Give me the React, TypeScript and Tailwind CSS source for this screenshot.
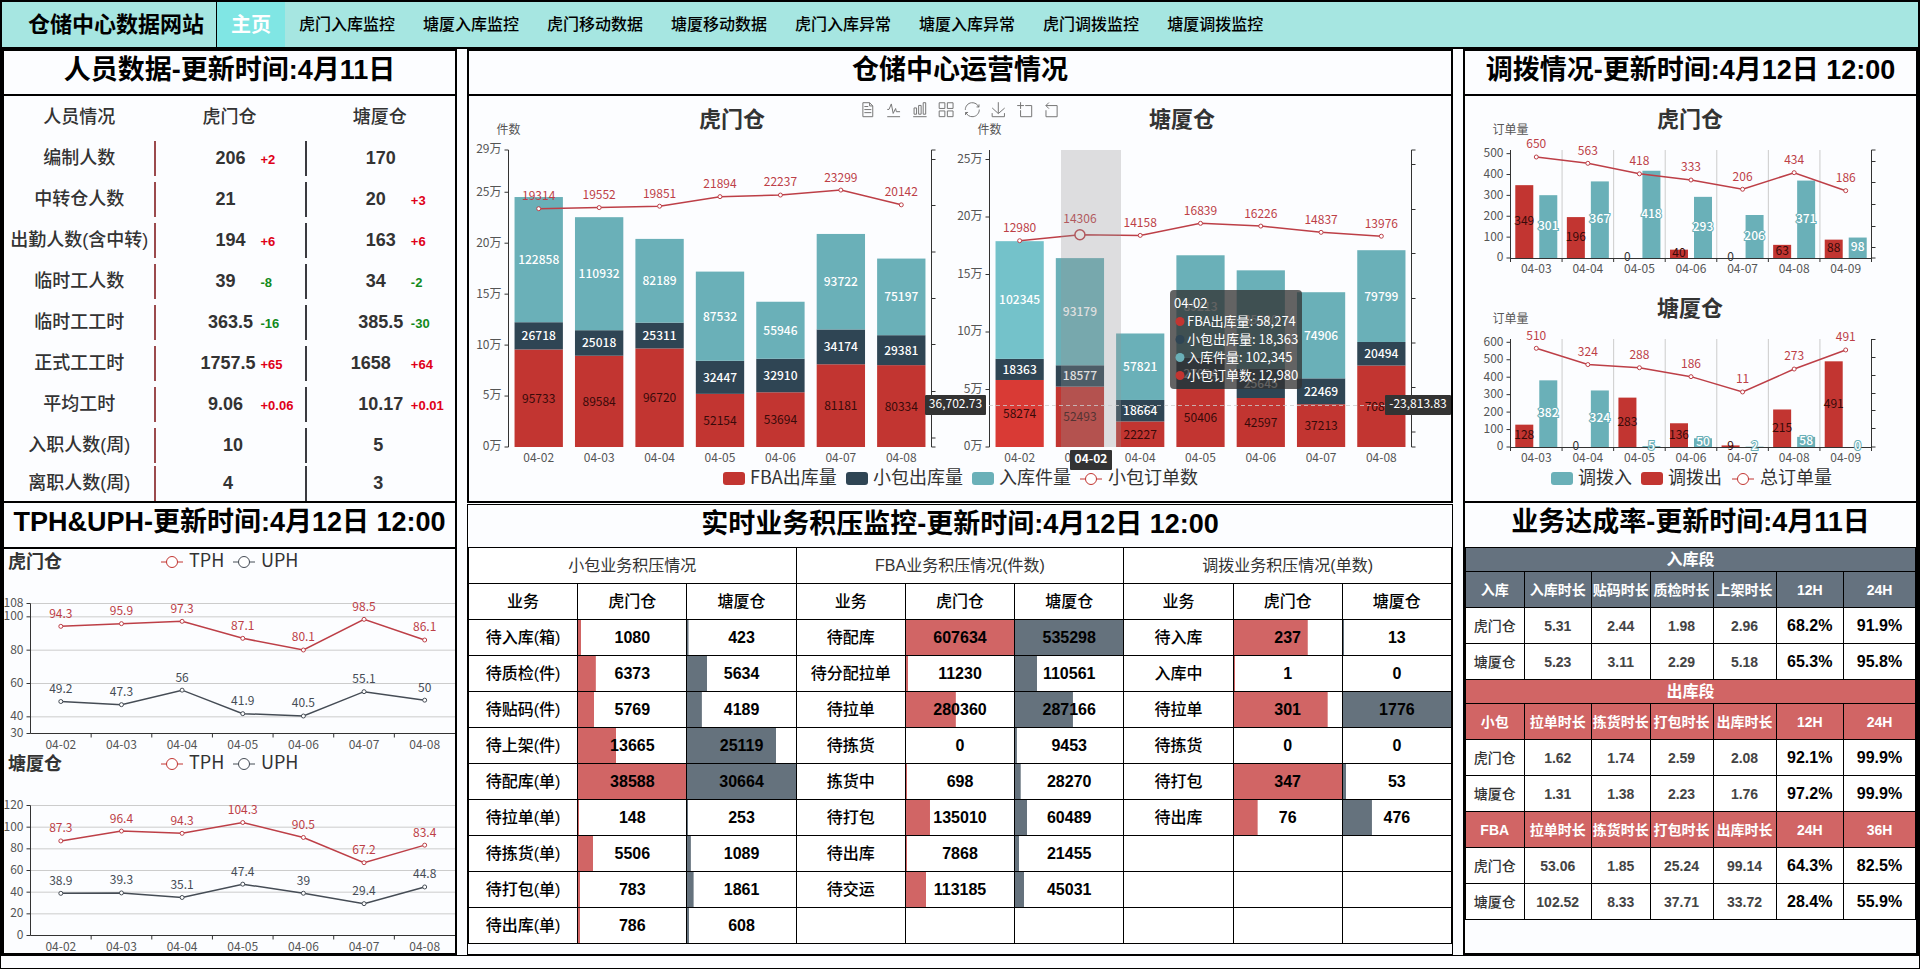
import type { ReactNode } from "react";

const RED = "#c23531";
const NAVY = "#2f4554";
const TEAL = "#6ab0b8";
const SLATE = "#454c55";
const INK = "#333333";
const CHART_FONT = "font-['Noto_Sans_CJK_SC',sans-serif]";

/* ---------- shared svg helpers ---------- */

type TxtProps = {
  x: number;
  y: number;
  size?: number;
  fill?: string;
  anchor?: "start" | "middle" | "end";
  bold?: boolean;
  halo?: string;
  children: ReactNode;
};

function Txt({ x, y, size = 12, fill = "#555", anchor = "middle", bold, halo, children }: TxtProps) {
  return (
    <text
      x={x}
      y={y + size * 0.37}
      fontSize={size}
      fill={fill}
      textAnchor={anchor}
      fontWeight={bold ? 700 : halo ? 500 : 400}
      stroke={halo}
      strokeWidth={halo ? 2 : undefined}
      paintOrder="stroke"
    >
      {children}
    </text>
  );
}

function Marker({ x, y, color }: { x: number; y: number; color: string }) {
  return <circle cx={x} cy={y} r={2} fill="#fff" stroke={color} strokeWidth={1} />;
}

function Axis({ x, top, bottom, ticks, side }: { x: number; top: number; bottom: number; ticks: number[]; side: 1 | -1 }) {
  return (
    <path
      d={`M${x},${top}V${bottom}` + ticks.map((t) => `M${x},${t}h${4 * side}`).join("")}
      stroke={INK}
      fill="none"
    />
  );
}

function LegendSwatch({ x, y, color, label }: { x: number; y: number; color: string; label: string }) {
  return (
    <g>
      <rect x={x} y={y - 6} width={22} height={13} rx={3} fill={color} />
      <Txt x={x + 27} y={y - 1} size={18} fill={INK} anchor="start">{label}</Txt>
    </g>
  );
}

function LegendLine({ x, y, color, label }: { x: number; y: number; color: string; label: string }) {
  return (
    <g>
      <path d={`M${x},${y + 1}h22`} stroke={color} />
      <circle cx={x + 11} cy={y + 1} r={5.5} fill="#fff" stroke={color} />
      <Txt x={x + 28} y={y - 1} size={18} fill={INK} anchor="start">{label}</Txt>
    </g>
  );
}

/* ---------- operations chart ---------- */

type Day = { fba: number; small: number; inbound: number; orders: number };

const HUMEN_OPS: Day[] = [
  { fba: 95733, small: 26718, inbound: 122858, orders: 19314 },
  { fba: 89584, small: 25018, inbound: 110932, orders: 19552 },
  { fba: 96720, small: 25311, inbound: 82189, orders: 19851 },
  { fba: 52154, small: 32447, inbound: 87532, orders: 21894 },
  { fba: 53694, small: 32910, inbound: 55946, orders: 22237 },
  { fba: 81181, small: 34174, inbound: 93722, orders: 23299 },
  { fba: 80334, small: 29381, inbound: 75197, orders: 20142 },
];

const TANGXIA_OPS: Day[] = [
  { fba: 58274, small: 18363, inbound: 102345, orders: 12980 },
  { fba: 52493, small: 18577, inbound: 93179, orders: 14306 },
  { fba: 22227, small: 18664, inbound: 57821, orders: 14158 },
  { fba: 50406, small: 27094, inbound: 89213, orders: 16839 },
  { fba: 42597, small: 25645, inbound: 85380, orders: 16226 },
  { fba: 37213, small: 22469, inbound: 74906, orders: 14837 },
  { fba: 70834, small: 20494, inbound: 79799, orders: 13976 },
];

const OPS_DATES = ["04-02", "04-03", "04-04", "04-05", "04-06", "04-07", "04-08"];

type OpsProps = {
  title: string;
  titleX: number;
  left: number;
  right: number;
  unit: number;
  yLabels: number[];
  days: Day[];
  lineY: (v: number) => number;
  rightTicks: number[];
  active?: number;
  hovered?: number;
};

function OpsGrid({ title, titleX, left, right, unit, yLabels, days, lineY, rightTicks, active, hovered }: OpsProps) {
  const top = 54;
  const bottom = 351;
  const step = (right - left) / 7;
  const bar = step * 0.8;
  const points = days.map((d, i) => [left + step * (i + 0.5), lineY(d.orders)]);
  return (
    <g>
      <Txt x={titleX} y={23} size={22} fill={INK} bold>{title}</Txt>
      <Txt x={left} y={34}>件数</Txt>
      {days.map((d, i) => {
        const x = left + step * i + (step - bar) / 2;
        const on = i === active;
        const parts = [
          { v: d.fba, fill: on ? "#d93a35" : RED, text: "#380a09", halo: undefined },
          { v: d.small, fill: NAVY, text: "#fff", halo: NAVY },
          { v: d.inbound, fill: on ? "#74c2ca" : TEAL, text: "#fff", halo: on ? "#74c2ca" : TEAL },
        ];
        let base = bottom;
        return (
          <g key={i}>
            {parts.map((p, k) => {
              const h = (p.v / 10000) * unit;
              base -= h;
              return (
                <g key={k}>
                  <rect x={x} y={base} width={bar} height={h} fill={p.fill} />
                  <Txt x={x + bar / 2} y={base + h / 2} fill={p.text} halo={p.halo}>{p.v}</Txt>
                </g>
              );
            })}
            <Txt x={x + bar / 2} y={362}>{OPS_DATES[i]}</Txt>
          </g>
        );
      })}
      <Axis x={left} top={top} bottom={bottom} ticks={yLabels.map((v) => (v === 29 ? top : bottom - v * unit))} side={-1} />
      <Axis x={right} top={top} bottom={bottom} ticks={rightTicks} side={1} />
      {yLabels.map((v) => (
        <Txt key={v} x={left - 7} y={(v === 29 ? top : bottom - v * unit) - 1} anchor="end">{v}万</Txt>
      ))}
      <polyline points={points.map((p) => p.join(",")).join(" ")} fill="none" stroke="#bd3f47" strokeWidth={1.5} />
      {points.map(([x, y], i) => (
        <g key={i}>
          {i === hovered ? (
            <circle cx={x} cy={y} r={5} fill="#fff" stroke="#bd3f47" strokeWidth={1.5} />
          ) : (
            <Marker x={x} y={y} color="#bd3f47" />
          )}
          <Txt x={x} y={y - (i === hovered ? 16 : 13)} fill="#bd3f47">{days[i].orders}</Txt>
        </g>
      ))}
    </g>
  );
}

const TOOL_ICONS = [
  "M17.5,17.3H33 M45.4,29.5h-28 M11.5,2v56H51V14.8L38.4,2H11.5z M38.4,2.2v12.7H51 M45.4,41.7h-28",
  "M4.1,28.9h7.1l9.3-22l7.4,38l9.7-19.7l3,12.8h14.9M4.1,58h51.4",
  "M6.7,22.9h10V48h-10V22.9zM24.9,13h10v35h-10V13zM43.2,2h10v46h-10V2zM3.1,58h53.7",
  "M2.3,2.2h22.8V25H2.3V2.2z M35,2.2h22.8V25H35V2.2zM2.3,35h22.8v22.8H2.3V35z M35,35h22.8v22.8H35V35z",
  "M47,18.9h9.8V8.7 M56.3,20.1 C52.1,9,40.5,0.6,26.8,2.1C12.6,3.7,1.6,16.2,2.1,30.6 M13,41.1H3.1v10.2 M3.7,39.9c4.2,11.1,15.8,19.5,29.5,18 c14.2-1.6,25.2-14.1,24.7-28.5",
  "M4.7,22.9L29.3,45.5L54.7,23.4M4.6,43.6L4.6,58L53.8,58L53.8,43.6M29.2,45.1L29.2,0",
  "M0,13.5h26.9 M13.5,26.9V0 M32.1,13.5H58V58H13.5 V32.1",
  "M22,1.4L9.9,13.5l12.3,12.3 M10.3,13.5H54.9v44.6 H10.3v-26",
];

const TOOLTIP = [
  { color: RED, text: "FBA出库量: 58,274" },
  { color: NAVY, text: "小包出库量: 18,363" },
  { color: TEAL, text: "入库件量: 102,345" },
  { color: RED, text: "小包订单数: 12,980" },
];

function PointerLabel({ x, y, w, text, bold }: { x: number; y: number; w: number; text: string; bold?: boolean }) {
  return (
    <g>
      <rect x={x} y={y} width={w} height={20} rx={1} fill="#333" />
      <Txt x={x + w / 2} y={y + 9} fill="#fff" bold={bold}>{text}</Txt>
    </g>
  );
}

function OperationsChart() {
  return (
    <svg viewBox="0 0 982 405" className={`block w-full overflow-visible ${CHART_FONT}`} role="img" aria-label="仓储中心运营情况">
      <OpsGrid
        title="虎门仓"
        titleX={263}
        left={39.5}
        right={462.5}
        unit={10.19}
        yLabels={[0, 5, 10, 15, 20, 25, 29]}
        days={HUMEN_OPS}
        lineY={(v) => 112.7 - (v - 19314) * 0.00467}
        rightTicks={[54, 63.5, 109.5, 156, 202.5, 248.5, 295.5, 342, 351]}
      />
      <OpsGrid
        title="塘厦仓"
        titleX={713}
        left={520.5}
        right={942.5}
        unit={11.5}
        yLabels={[0, 5, 10, 15, 20, 25]}
        days={TANGXIA_OPS}
        lineY={(v) => 144.7 - (v - 12980) * 0.0045}
        rightTicks={[54, 68.5, 113.5, 157.5, 202.5, 247, 291.5, 336, 351]}
        active={0}
        hovered={1}
      />
      <g fill="none" stroke="#777" strokeWidth={1}>
        {TOOL_ICONS.map((d, i) => (
          <path key={i} d={d} transform={`translate(${391 + i * 26.2},6.2) scale(0.25)`} vectorEffect="non-scaling-stroke" />
        ))}
      </g>
      <rect x={592} y={54} width={60} height={297} fill="#969696" fillOpacity={0.3} />
      <path d="M520,309.5H942" stroke="#ccc" strokeDasharray="4 3" strokeOpacity={0.8} />
      <PointerLabel x={456} y={299} w={61} text="36,702.73" />
      <PointerLabel x={916} y={299} w={66} text="-23,813.83" />
      <PointerLabel x={601} y={354} w={42} text="04-02" bold />
      <g>
        <rect x={701} y={194} width={132} height={99} rx={4} fill="#323232" fillOpacity={0.76} />
        <Txt x={705} y={207} size={13} fill="#fff" anchor="start">04-02</Txt>
        {TOOLTIP.map((t, i) => (
          <g key={t.text}>
            <circle cx={711} cy={225.5 + i * 18} r={4.5} fill={t.color} />
            <Txt x={718} y={225 + i * 18} size={13} fill="#fff" anchor="start">{t.text}</Txt>
          </g>
        ))}
      </g>
      <LegendSwatch x={254} y={382} color={RED} label="FBA出库量" />
      <LegendSwatch x={377} y={382} color={NAVY} label="小包出库量" />
      <LegendSwatch x={503} y={382} color={TEAL} label="入库件量" />
      <LegendLine x={611} y={382} color={RED} label="小包订单数" />
    </svg>
  );
}

/* ---------- transfer chart ---------- */

const TRANSFER_DATES = ["04-03", "04-04", "04-05", "04-06", "04-07", "04-08", "04-09"];

type TransferProps = {
  title: string;
  top: number;
  bottom: number;
  unit: number;
  yMax: number;
  out: number[];
  into: number[];
  total: number[];
  lineY: (v: number) => number;
  rightTicks: number[];
};

function TransferGrid({ title, top, bottom, unit, yMax, out, into, total, lineY, rightTicks }: TransferProps) {
  const left = 45.5;
  const right = 406.5;
  const step = (right - left) / 7;
  const ys = Array.from({ length: yMax / 100 + 1 }, (_, i) => i * 100);
  const center = (i: number) => left + step * (i + 0.5);
  return (
    <g>
      <Txt x={225} y={top - 31} size={22} fill={INK} bold>{title}</Txt>
      <Txt x={left} y={top - 20}>订单量</Txt>
      {[1, 2, 3, 4, 5, 6].map((i) => (
        <path key={i} d={`M${left + step * i},${top}V${bottom}`} stroke="#ccc" />
      ))}
      {TRANSFER_DATES.map((date, i) => (
        <g key={date}>
          <rect x={center(i) - 21} y={bottom - out[i] * unit} width={18} height={out[i] * unit} fill={RED} />
          <rect x={center(i) + 3} y={bottom - into[i] * unit} width={18} height={into[i] * unit} fill={TEAL} />
        </g>
      ))}
      <path
        d={`M${left},${bottom + 0.5}H${right}` + [0, 1, 2, 3, 4, 5, 6, 7].map((i) => `M${left + step * i},${bottom}v4`).join("")}
        stroke={INK}
      />
      <Axis x={left} top={top} bottom={bottom} ticks={ys.map((v) => bottom - v * unit)} side={-1} />
      <Axis x={right} top={top} bottom={bottom} ticks={rightTicks} side={1} />
      {ys.map((v) => (
        <Txt key={v} x={left - 7} y={bottom - v * unit - 1} anchor="end">{v}</Txt>
      ))}
      {TRANSFER_DATES.map((date, i) => (
        <g key={date}>
          <Txt x={center(i) - 12} y={bottom - (out[i] * unit) / 2 - 1} fill={out[i] ? "#380a09" : INK}>{out[i]}</Txt>
          <Txt x={center(i) + 12} y={bottom - (into[i] * unit) / 2 - 1} fill="#fff" halo={TEAL}>{into[i]}</Txt>
          <Txt x={center(i)} y={bottom + 11}>{date}</Txt>
        </g>
      ))}
      <polyline points={total.map((v, i) => `${center(i)},${lineY(v)}`).join(" ")} fill="none" stroke="#bd3f47" strokeWidth={1.5} />
      {total.map((v, i) => (
        <g key={i}>
          <Marker x={center(i)} y={lineY(v)} color="#bd3f47" />
          <Txt x={center(i)} y={lineY(v) - 13} fill="#bd3f47">{v}</Txt>
        </g>
      ))}
    </g>
  );
}

function TransferChart() {
  return (
    <svg viewBox="0 0 451 405" className={`block w-full overflow-visible ${CHART_FONT}`} role="img" aria-label="调拨情况">
      <TransferGrid
        title="虎门仓"
        top={54}
        bottom={162}
        unit={0.2087}
        yMax={500}
        out={[349, 196, 0, 40, 0, 63, 88]}
        into={[301, 367, 418, 293, 206, 371, 98]}
        total={[650, 563, 418, 333, 206, 434, 186]}
        lineY={(v) => 61 + (650 - v) * 0.0726}
        rightTicks={[54, 65.5, 86.5, 108.5, 130.5, 151.5, 162]}
      />
      <TransferGrid
        title="塘厦仓"
        top={243}
        bottom={351}
        unit={0.1745}
        yMax={600}
        out={[128, 0, 283, 136, 9, 215, 491]}
        into={[382, 324, 5, 50, 2, 58, 0]}
        total={[510, 324, 288, 186, 11, 273, 491]}
        lineY={(v) => 252.3 + (510 - v) * 0.0875}
        rightTicks={[243.5, 261.5, 279.5, 297.5, 314.5, 332.5, 351]}
      />
      <LegendSwatch x={86} y={382} color={TEAL} label="调拨入" />
      <LegendSwatch x={176} y={382} color={RED} label="调拨出" />
      <LegendLine x={267} y={382} color={RED} label="总订单量" />
    </svg>
  );
}

/* ---------- TPH & UPH charts ---------- */

function RateChart({ title, min, max, ticks, tph, uph }: { title: string; min: number; max: number; ticks: number[]; tph: number[]; uph: number[] }) {
  const left = 26.5;
  const right = 451;
  const top = 54.5;
  const bottom = 184.5;
  const step = (right - left) / 7;
  const yOf = (v: number) => bottom - ((v - min) / (max - min)) * (bottom - top);
  const center = (i: number) => left + step * (i + 0.5);
  const series = [
    { name: "TPH", data: tph, color: "#bd3f47" },
    { name: "UPH", data: uph, color: SLATE },
  ];
  return (
    <svg viewBox="0 0 451 202" className={`block w-full overflow-visible ${CHART_FONT}`} role="img" aria-label={`${title} TPH UPH`}>
      <Txt x={4} y={12} size={18} fill={INK} anchor="start" bold>{title}</Txt>
      <LegendLine x={157} y={12} color={RED} label="TPH" />
      <LegendLine x={229} y={12} color={SLATE} label="UPH" />
      {ticks.filter((t) => t > min).map((t) => (
        <path key={t} d={`M${left},${yOf(t)}H${right}`} stroke="#ccc" />
      ))}
      <Axis x={left} top={top} bottom={bottom} ticks={ticks.map(yOf)} side={-1} />
      <path d={`M${left},${bottom}H${right}` + [1, 2, 3, 4, 5, 6].map((i) => `M${left + step * i},${bottom}v4`).join("")} stroke={INK} />
      {ticks.map((t) => (
        <Txt key={t} x={left - 7} y={yOf(t) - 1} anchor="end">{t}</Txt>
      ))}
      {OPS_DATES.map((d, i) => (
        <Txt key={d} x={center(i)} y={196}>{d}</Txt>
      ))}
      {series.map((s) => (
        <g key={s.name}>
          <polyline points={s.data.map((v, i) => `${center(i)},${yOf(v)}`).join(" ")} fill="none" stroke={s.color} strokeWidth={1.5} />
          {s.data.map((v, i) => (
            <g key={i}>
              <Marker x={center(i)} y={yOf(v)} color={s.color} />
              <Txt x={center(i)} y={yOf(v) - 13} fill={s.color}>{v}</Txt>
            </g>
          ))}
        </g>
      ))}
    </svg>
  );
}

/* ---------- tables ---------- */

type Staff = { label: string; slot: string; a: string; da?: string; b: string; db?: string };

const STAFF: Staff[] = [
  { label: "编制人数", slot: "w-[30px]", a: "206", da: "+2", b: "170" },
  { label: "中转仓人数", slot: "w-[30px]", a: "21", b: "20", db: "+3" },
  { label: "出勤人数(含中转)", slot: "w-[30px]", a: "194", da: "+6", b: "163", db: "+6" },
  { label: "临时工人数", slot: "w-[30px]", a: "39", da: "-8", b: "34", db: "-2" },
  { label: "临时工工时", slot: "w-[45px]", a: "363.5", da: "-16", b: "385.5", db: "-30" },
  { label: "正式工工时", slot: "w-[60px]", a: "1757.5", da: "+65", b: "1658", db: "+64" },
  { label: "平均工时", slot: "w-[45px]", a: "9.06", da: "+0.06", b: "10.17", db: "+0.01" },
  { label: "入职人数(周)", slot: "w-[15px]", a: "10", b: "5" },
  { label: "离职人数(周)", slot: "w-[15px]", a: "4", b: "3" },
];

function StaffCell({ value, diff, slot, line }: { value: string; diff?: string; slot: string; line: string }) {
  return (
    <td className="p-0">
      <div className={`grid h-[35px] grid-cols-[1fr_60px_1fr] items-baseline border-l-2 pt-1 ${line}`}>
        <span />
        <span className="flex justify-center">
          <span className={`whitespace-nowrap ${slot}`}>{value}</span>
        </span>
        <span className={`text-[13px] ${diff?.startsWith("-") ? "text-[#128a1c]" : "text-[#df0018]"}`}>{diff}</span>
      </div>
    </td>
  );
}

function StaffTable() {
  return (
    <table className="w-full table-fixed border-collapse text-[18px] font-bold text-[#333]">
      <thead>
        <tr className="h-[42px]">
          <th className="p-0 font-medium">人员情况</th>
          <th className="p-0 font-medium">虎门仓</th>
          <th className="p-0 font-medium">塘厦仓</th>
        </tr>
      </thead>
      <tbody>
        {STAFF.map((r, i) => (
          <tr key={r.label} className={i === STAFF.length - 1 ? "h-[35px]" : "h-[41px]"}>
            <th className="p-0 font-medium whitespace-nowrap">{r.label}</th>
            <StaffCell value={r.a} diff={r.da} slot={r.slot} line="border-[#9b4a4d]" />
            <StaffCell value={r.b} diff={r.db} slot={r.slot} line="border-[#3a3a40]" />
          </tr>
        ))}
      </tbody>
    </table>
  );
}

type Backlog = [string, number, number];

const BACKLOG: { title: string; rows: Backlog[] }[] = [
  {
    title: "小包业务积压情况",
    rows: [
      ["待入库(箱)", 1080, 423], ["待质检(件)", 6373, 5634], ["待贴码(件)", 5769, 4189],
      ["待上架(件)", 13665, 25119], ["待配库(单)", 38588, 30664], ["待拉单(单)", 148, 253],
      ["待拣货(单)", 5506, 1089], ["待打包(单)", 783, 1861], ["待出库(单)", 786, 608],
    ],
  },
  {
    title: "FBA业务积压情况(件数)",
    rows: [
      ["待配库", 607634, 535298], ["待分配拉单", 11230, 110561], ["待拉单", 280360, 287166],
      ["待拣货", 0, 9453], ["拣货中", 698, 28270], ["待打包", 135010, 60489],
      ["待出库", 7868, 21455], ["待交运", 113185, 45031],
    ],
  },
  {
    title: "调拨业务积压情况(单数)",
    rows: [
      ["待入库", 237, 13], ["入库中", 1, 0], ["待拉单", 301, 1776],
      ["待拣货", 0, 0], ["待打包", 347, 53], ["待出库", 76, 476],
    ],
  },
];

function BarCell({ value, max, tone }: { value?: number; max: number; tone: string }) {
  if (value === undefined) return <td className="border border-black" />;
  const width = value === 0 ? 0 : Math.max((value / max) * 100, 1);
  return (
    <td
      className={`border border-black bg-white bg-no-repeat p-0 text-center font-bold ${tone}`}
      style={{ backgroundSize: `${width}% 100%` }}
    >
      {value}
    </td>
  );
}

function BacklogTable() {
  const maxes = BACKLOG.map((g) => [Math.max(...g.rows.map((r) => r[1])), Math.max(...g.rows.map((r) => r[2]))]);
  return (
    <table className="w-full table-fixed border-collapse bg-white text-[16px] leading-5 text-black">
      <thead>
        <tr className="h-9">
          {BACKLOG.map((g) => (
            <th key={g.title} colSpan={3} className="border border-black p-0 font-normal text-[#333]">{g.title}</th>
          ))}
        </tr>
        <tr className="h-9">
          {BACKLOG.flatMap((g) =>
            ["业务", "虎门仓", "塘厦仓"].map((h) => (
              <th key={g.title + h} className="border border-black p-0 font-medium">{h}</th>
            )),
          )}
        </tr>
      </thead>
      <tbody>
        {Array.from({ length: 9 }, (_, i) => (
          <tr key={i} className="h-9">
            {BACKLOG.flatMap((g, k) => {
              const row = g.rows[i];
              return [
                <th key={`${k}n`} className="border border-black p-0 font-medium">{row?.[0]}</th>,
                <BarCell key={`${k}a`} value={row?.[1]} max={maxes[k][0]} tone="bg-[linear-gradient(#d16565,#d16565)]" />,
                <BarCell key={`${k}b`} value={row?.[2]} max={maxes[k][1]} tone="bg-[linear-gradient(#65727d,#65727d)]" />,
              ];
            })}
          </tr>
        ))}
      </tbody>
    </table>
  );
}

const SLATE_BG = "bg-[#65727f]";
const ROSE_BG = "bg-[#d16565]";

const INBOUND = {
  head: ["入库", "入库时长", "贴码时长", "质检时长", "上架时长", "12H", "24H"],
  rows: [
    ["虎门仓", "5.31", "2.44", "1.98", "2.96", "68.2%", "91.9%"],
    ["塘厦仓", "5.23", "3.11", "2.29", "5.18", "65.3%", "95.8%"],
  ],
};
const SMALL_OUT = {
  head: ["小包", "拉单时长", "拣货时长", "打包时长", "出库时长", "12H", "24H"],
  rows: [
    ["虎门仓", "1.62", "1.74", "2.59", "2.08", "92.1%", "99.9%"],
    ["塘厦仓", "1.31", "1.38", "2.23", "1.76", "97.2%", "99.9%"],
  ],
};
const FBA_OUT = {
  head: ["FBA", "拉单时长", "拣货时长", "打包时长", "出库时长", "24H", "36H"],
  rows: [
    ["虎门仓", "53.06", "1.85", "25.24", "99.14", "64.3%", "82.5%"],
    ["塘厦仓", "102.52", "8.33", "37.71", "33.72", "28.4%", "55.9%"],
  ],
};

function Section({ title, bg }: { title: string; bg: string }) {
  return (
    <tr className={`h-6 text-[16px] text-white ${bg}`}>
      <th colSpan={7} className="border border-black p-0 font-bold">{title}</th>
    </tr>
  );
}

function RateRows({ data, bg }: { data: typeof INBOUND; bg: string }) {
  return (
    <>
      <tr className={`h-9 text-white ${bg}`}>
        {data.head.map((h) => (
          <th key={h} className="border border-black p-0 font-bold whitespace-nowrap">{h}</th>
        ))}
      </tr>
      {data.rows.map((r) => (
        <tr key={r[0]} className="h-9 bg-white">
          <th className="border border-black p-0 font-medium text-[#333]">{r[0]}</th>
          {r.slice(1, 5).map((v, i) => (
            <td key={i} className="border border-black p-0 text-center font-bold text-[#444]">{v}</td>
          ))}
          {r.slice(5).map((v, i) => (
            <td key={i} className="border border-black p-0 text-center text-[16px] font-bold text-black">{v}</td>
          ))}
        </tr>
      ))}
    </>
  );
}

function AchievementTable() {
  return (
    <table className="w-full table-fixed border-collapse text-[14px] leading-5">
      <colgroup>
        <col className="w-[13%]" />
        <col className="w-[15%]" />
        <col className="w-[13%]" />
        <col className="w-[14%]" />
        <col className="w-[14%]" />
        <col className="w-[15%]" />
        <col className="w-[16%]" />
      </colgroup>
      <tbody>
        <Section title="入库段" bg={SLATE_BG} />
        <RateRows data={INBOUND} bg={SLATE_BG} />
        <Section title="出库段" bg={ROSE_BG} />
        <RateRows data={SMALL_OUT} bg={ROSE_BG} />
        <RateRows data={FBA_OUT} bg={ROSE_BG} />
      </tbody>
    </table>
  );
}

/* ---------- page ---------- */

const NAV = ["虎门入库监控", "塘厦入库监控", "虎门移动数据", "塘厦移动数据", "虎门入库异常", "塘厦入库异常", "虎门调拨监控", "塘厦调拨监控"];

function Heading({ className, children }: { className: string; children: ReactNode }) {
  return (
    <h2 className={`text-center text-[27px] leading-[38px] font-bold whitespace-nowrap text-black ${className}`}>
      {children}
    </h2>
  );
}

export default function App() {
  return (
    <div className="flex min-h-screen flex-col border border-black bg-[#fcfdff] font-['Liberation_Sans','Noto_Sans_CJK_SC',sans-serif]">
      <header className="flex h-[47px] items-stretch border border-black bg-[#a6e6e1]">
        <h1 className="flex items-center border-r border-black pr-3 pl-[26px] text-[22px] font-bold whitespace-nowrap text-black">仓储中心数据网站</h1>
        <nav className="flex items-stretch">
          <a href="#home" className="flex items-center bg-[#80e6e4] px-[14px] text-[20px] font-bold text-white">主页</a>
          {NAV.map((n) => (
            <a key={n} href={`#${n}`} className="flex items-center px-[14px] text-[16px] font-medium whitespace-nowrap text-black">{n}</a>
          ))}
        </nav>
      </header>

      <main className="grid grid-cols-[minmax(0,455fr)_minmax(0,986fr)_minmax(0,455fr)] items-stretch gap-x-[10px] border border-black">
        <div className="flex flex-col">
          <section className="border-2 border-black">
            <Heading className="h-[45px] border-b-2 border-black">人员数据-更新时间:4月11日</Heading>
            <StaffTable />
          </section>
          <section className="flex-1 border-2 border-t-0 border-black">
            <Heading className="h-[46px] border-b-2 border-black">TPH&amp;UPH-更新时间:4月12日 12:00</Heading>
            <RateChart
              title="虎门仓"
              min={30}
              max={108}
              ticks={[30, 40, 60, 80, 100, 108]}
              tph={[94.3, 95.9, 97.3, 87.1, 80.1, 98.5, 86.1]}
              uph={[49.2, 47.3, 56, 41.9, 40.5, 55.1, 50]}
            />
            <RateChart
              title="塘厦仓"
              min={0}
              max={120}
              ticks={[0, 20, 40, 60, 80, 100, 120]}
              tph={[87.3, 96.4, 94.3, 104.3, 90.5, 67.2, 83.4]}
              uph={[38.9, 39.3, 35.1, 47.4, 39, 29.4, 44.8]}
            />
          </section>
        </div>

        <div className="flex flex-col gap-px">
          <section className="border-2 border-black">
            <Heading className="h-[45px] border-b-2 border-black">仓储中心运营情况</Heading>
            <OperationsChart />
          </section>
          <section className="flex-1 border border-black">
            <Heading className="h-[42px]">实时业务积压监控-更新时间:4月12日 12:00</Heading>
            <BacklogTable />
          </section>
        </div>

        <div className="flex flex-col">
          <section className="border-2 border-black">
            <Heading className="h-[45px] border-b-2 border-black">调拨情况-更新时间:4月12日 12:00</Heading>
            <TransferChart />
          </section>
          <section className="flex-1 border-2 border-t-0 border-black">
            <Heading className="h-11">业务达成率-更新时间:4月11日</Heading>
            <AchievementTable />
          </section>
        </div>
      </main>
    </div>
  );
}
